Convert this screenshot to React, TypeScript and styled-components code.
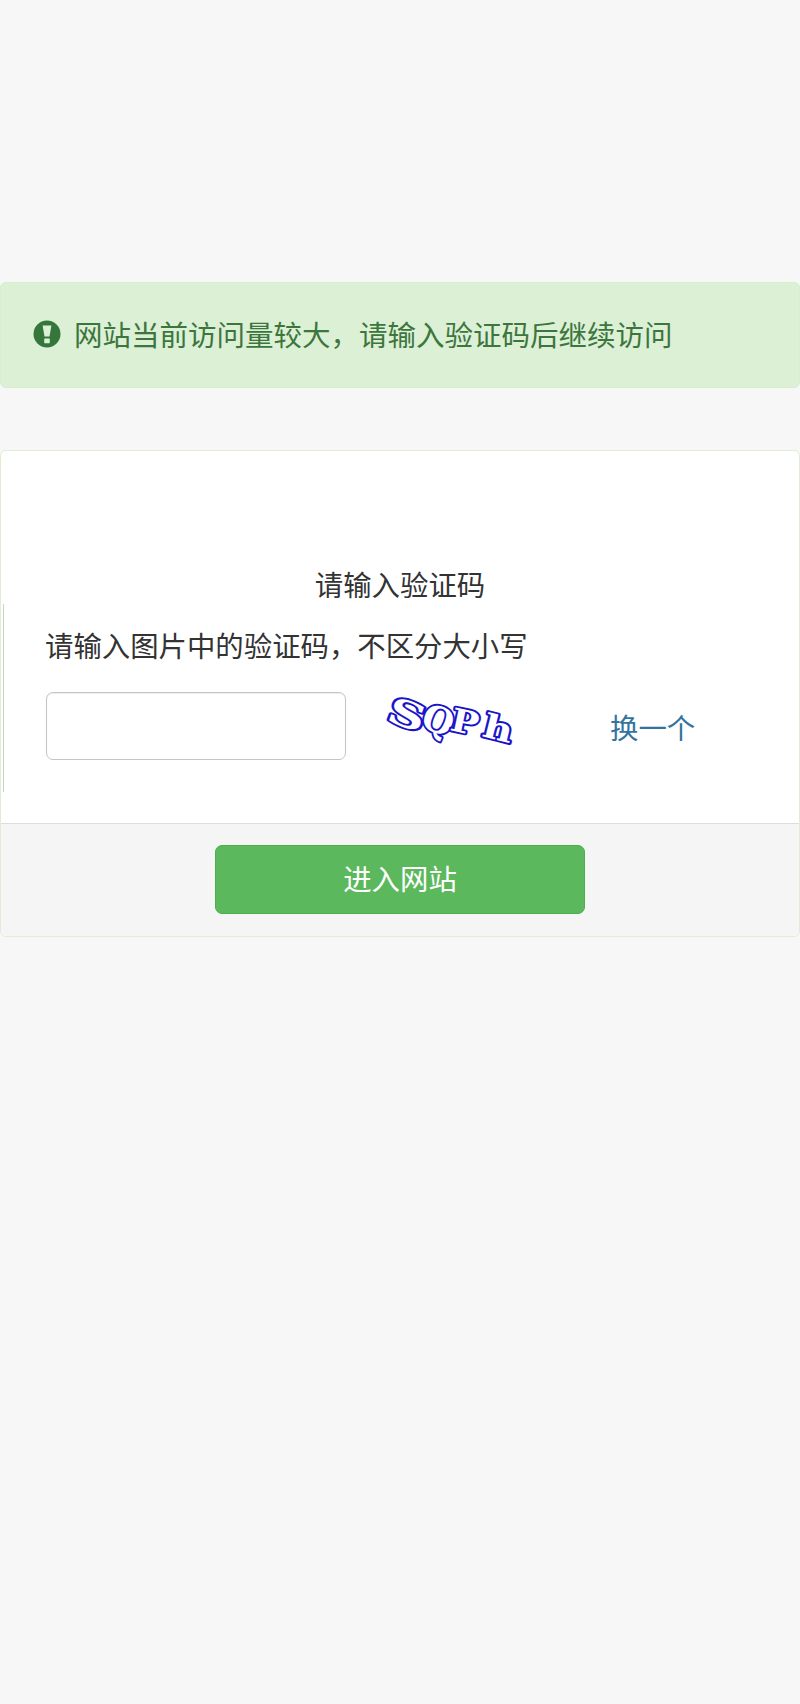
import React from 'react';
import styled, { createGlobalStyle } from 'styled-components';

const GlobalStyle = createGlobalStyle`
  html, body {
    margin: 0;
    padding: 0;
    background: #f7f7f8;
  }
  * {
    box-sizing: border-box;
  }
`;

const Page = styled.div`
  min-height: 1704px;
  padding-top: 282px;
  font-family: 'Noto Sans CJK SC', 'Liberation Sans', sans-serif;
  font-size: 28.4px;
  color: #333;
`;

const Alert = styled.div`
  display: flex;
  align-items: center;
  gap: 13px;
  height: 106px;
  padding: 0 0 4px 32px;
  margin-bottom: 62px;
  background: #dcf0d6;
  border: 1px solid #d8ecce;
  border-radius: 6px;
  color: #3c763d;
  font-size: 28.5px;
`;

const AlertIconWrap = styled.span`
  display: flex;
  margin-top: 2px;
`;

const Card = styled.div`
  position: relative;
  background: #fff;
  border: 1px solid #e1edd2;
  border-radius: 6px;
  overflow: hidden;

  &::before {
    content: '';
    position: absolute;
    left: 2px;
    top: 153px;
    width: 1px;
    height: 188px;
    background: #c6d6c6;
  }
`;

const Body = styled.div`
  height: 372px;
  padding: 108px 44px 0;
`;

const Title = styled.div`
  text-align: center;
  line-height: 50px;
  margin-bottom: 11px;
`;

const Hint = styled.div`
  line-height: 50px;
  margin-bottom: 22px;
`;

const CaptchaRow = styled.div`
  display: flex;
  align-items: center;
`;

const CodeInput = styled.input`
  width: 300px;
  height: 68px;
  margin-left: 1px;
  background: #fff;
  border: 1px solid #c4c4c4;
  border-radius: 7px;
  box-shadow: inset 0 1px 1px rgba(0, 0, 0, 0.075);
`;

const CaptchaImage = styled.svg`
  width: 160px;
  height: 108px;
  margin: -20px 0 -20px 23px;
`;

const SwapLink = styled.a`
  margin-left: 81px;
  color: #32749f;
  text-decoration: none;
`;

const Footer = styled.div`
  display: flex;
  justify-content: center;
  align-items: flex-start;
  height: 113px;
  padding-top: 21px;
  background: #f5f5f6;
  border-top: 1px solid #ddd;
`;

const EnterButton = styled.button`
  width: 370px;
  height: 69px;
  padding: 0 0 5px;
  background: #5cb85c;
  border: 1px solid #4cae4c;
  border-radius: 7px;
  color: #fff;
  font: inherit;
`;

const AlertIcon = () => (
  <svg width="28" height="28" viewBox="0 0 28 28">
    <circle cx="14" cy="14" r="13.5" fill="#35763a" />
    <path d="M9.6 5.5h8.8l-1.9 11h-5z" fill="#dcf0d6" />
    <rect x="11.2" y="18.4" width="5.6" height="4.8" rx="0.6" fill="#dcf0d6" />
  </svg>
);

const Captcha = () => {
  const letters = [
    { ch: 'S', x: 16, y: 28, rotate: 20, sx: 1.45, size: 36 },
    { ch: 'Q', x: 50, y: 34, rotate: 22, sx: 1, size: 36 },
    { ch: 'P', x: 80, y: 38, rotate: 12, sx: 1.15, size: 32 },
    { ch: 'h', x: 112, y: 44, rotate: 14, sx: 1.25, size: 33 },
  ];
  return (
    <CaptchaImage viewBox="0 -20 160 108">
      {letters.map((l) => (
        <text
          key={l.ch}
          transform={`translate(${l.x} ${l.y}) rotate(${l.rotate}) scale(${l.sx} 1)`}
          fontFamily="'DejaVu Serif', serif"
          fontWeight="900"
          fontSize={l.size}
          fill="#fff"
          stroke="#1a14c8"
          strokeWidth="3.8"
          strokeLinejoin="round"
          paintOrder="stroke"
        >
          {l.ch}
        </text>
      ))}
    </CaptchaImage>
  );
};

const App: React.FC = () => {
  return (
    <Page>
      <GlobalStyle />
      <Alert>
        <AlertIconWrap>
          <AlertIcon />
        </AlertIconWrap>
        <span>网站当前访问量较大，请输入验证码后继续访问</span>
      </Alert>
      <Card>
        <Body>
          <Title>请输入验证码</Title>
          <Hint>请输入图片中的验证码，不区分大小写</Hint>
          <CaptchaRow>
            <CodeInput type="text" />
            <Captcha />
            <SwapLink href="#">换一个</SwapLink>
          </CaptchaRow>
        </Body>
        <Footer>
          <EnterButton type="button">进入网站</EnterButton>
        </Footer>
      </Card>
    </Page>
  );
};

export default App;
